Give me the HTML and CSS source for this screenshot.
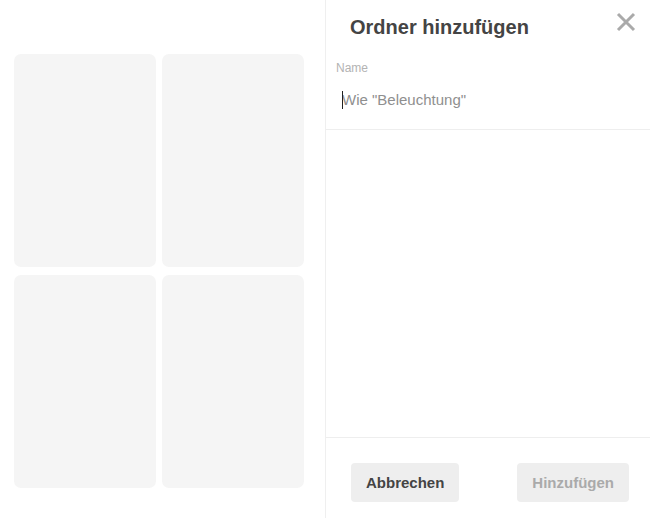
FILE: index.html
```html
<!DOCTYPE html>
<html lang="de">
<head>
<meta charset="utf-8">
<title>Ordner hinzufügen</title>
<link rel="stylesheet" href="styles.css">
</head>
<body>
<div class="page">
  <div class="gallery">
    <div class="grid">
      <div class="card"></div>
      <div class="card"></div>
      <div class="card"></div>
      <div class="card"></div>
    </div>
  </div>
  <aside class="panel">
    <div class="panel-header">
      <h1 class="title">Ordner hinzufügen</h1>
      <button class="close" aria-label="Schließen">
        <svg width="20" height="20" viewBox="0 0 20 20"><path d="M2 2 L18 18 M18 2 L2 18" stroke="#aaaaaa" stroke-width="3" stroke-linecap="butt" fill="none"/></svg>
      </button>
    </div>
    <div class="field">
      <label class="label" for="name">Name</label>
      <div class="input-wrap">
        <input id="name" class="input" type="text" placeholder="Wie &quot;Beleuchtung&quot;">
        <span class="caret"></span>
      </div>
    </div>
    <div class="spacer"></div>
    <div class="footer">
      <button class="btn btn-cancel">Abbrechen</button>
      <button class="btn btn-add" disabled>Hinzufügen</button>
    </div>
  </aside>
</div>
</body>
</html>
```
FILE: styles.css
```css
* { box-sizing: border-box; }
html, body { margin: 0; padding: 0; background: #fff; }
body { font-family: "Liberation Sans", Arial, sans-serif; }
.page { display: flex; width: 650px; height: 518px; overflow: hidden; }
.gallery { width: 325px; flex: none; padding: 54px 0 0 14px; }
.grid { display: grid; grid-template-columns: 142px 142px; grid-template-rows: 213px 213px; column-gap: 6px; row-gap: 8px; }
.card { background: #f5f5f5; border-radius: 7px; }
.panel { flex: 1; display: flex; flex-direction: column; border-left: 1px solid #efefef; height: 518px; }
.panel-header { height: 54px; display: flex; justify-content: space-between; align-items: flex-start; padding: 16px 14px 0 24px; }
.title { margin: 0; font-size: 20px; font-weight: bold; color: #444; line-height: 23px; }
.close { border: 0; background: none; padding: 0; margin-top: -4px; width: 20px; height: 20px; cursor: pointer; }
.close svg { display: block; }
.field { padding: 7px 10px 20px; border-bottom: 1px solid #eeeeee; display: flex; flex-direction: column; }
.label { font-size: 12px; line-height: 14px; color: #b3b3b3; }
.input-wrap { position: relative; margin-top: 16px; }
.input { display: block; width: 100%; border: 0; outline: none; padding: 0 0 0 6px; font-family: inherit; font-size: 15px; line-height: 18px; height: 18px; color: #333; background: transparent; }
.input::placeholder { color: #8f8f8f; }
.caret { position: absolute; left: 6px; top: 0; width: 1px; height: 18px; background: #222; }
.spacer { flex: 1; }
.footer { border-top: 1px solid #eeeeee; padding: 25px 21px 16px 25px; display: flex; justify-content: space-between; }
.btn { height: 39px; border: 0; border-radius: 4px; background: #eeeeee; font-family: inherit; font-weight: bold; font-size: 15px; padding: 0 15px; }
.btn-cancel { color: #444; }
.btn-add { color: #aaaaaa; }
```
